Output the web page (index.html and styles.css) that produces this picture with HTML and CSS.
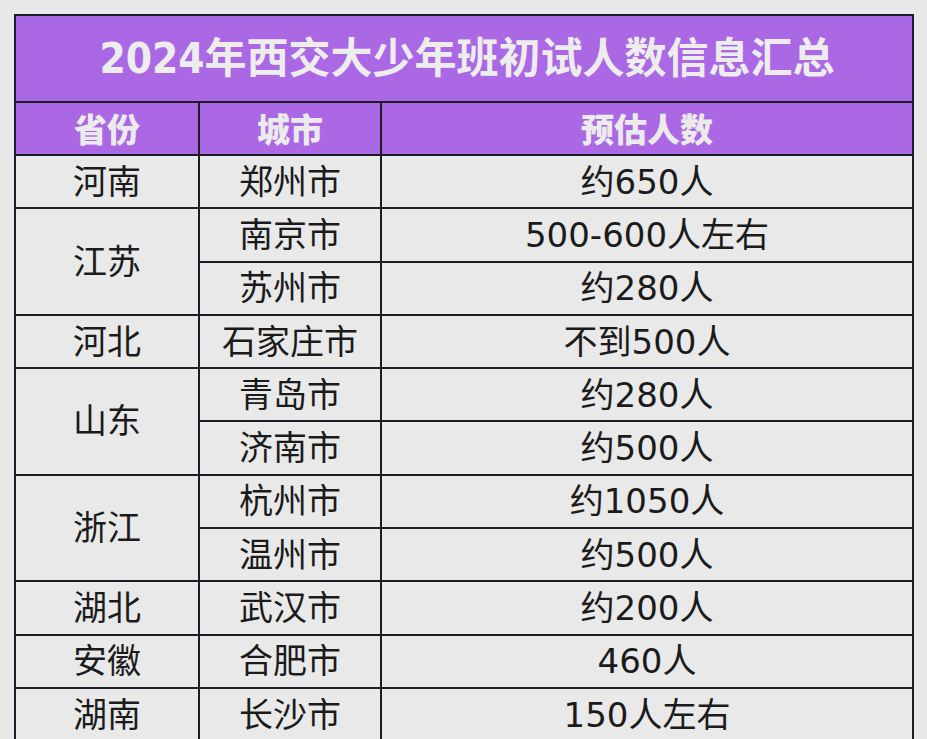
FILE: index.html
```html
<!DOCTYPE html>
<html lang="zh-CN">
<head>
<meta charset="utf-8">
<title>2024年西交大少年班初试人数信息汇总</title>
<link rel="stylesheet" href="styles.css">
</head>
<body>
<div class="page">
  <table class="summary">
    <colgroup>
      <col class="c-prov">
      <col class="c-city">
      <col class="c-num">
    </colgroup>
    <thead>
      <tr class="title-row"><th colspan="3" class="title">2024年西交大少年班初试人数信息汇总</th></tr>
      <tr class="head-row"><th>省份</th><th>城市</th><th>预估人数</th></tr>
    </thead>
    <tbody>
      <tr><td>河南</td><td>郑州市</td><td>约650人</td></tr>
      <tr><td rowspan="2">江苏</td><td>南京市</td><td>500-600人左右</td></tr>
      <tr><td>苏州市</td><td>约280人</td></tr>
      <tr><td>河北</td><td>石家庄市</td><td>不到500人</td></tr>
      <tr><td rowspan="2">山东</td><td>青岛市</td><td>约280人</td></tr>
      <tr><td>济南市</td><td>约500人</td></tr>
      <tr><td rowspan="2">浙江</td><td>杭州市</td><td>约1050人</td></tr>
      <tr><td>温州市</td><td>约500人</td></tr>
      <tr><td>湖北</td><td>武汉市</td><td>约200人</td></tr>
      <tr><td>安徽</td><td>合肥市</td><td>460人</td></tr>
      <tr><td>湖南</td><td>长沙市</td><td>150人左右</td></tr>
    </tbody>
  </table>
</div>
</body>
</html>
```

FILE: styles.css
```css
html, body {
  margin: 0;
  padding: 0;
  background: #e8e8e8;
}

.page {
  padding: 14px 15px 0 14px;
  height: 739px;
  box-sizing: border-box;
  overflow: hidden;
}

.summary {
  width: 898px;
  border-collapse: collapse;
  table-layout: fixed;
  font-family: "DejaVu Sans", "Noto Sans CJK SC", sans-serif;
  color: #1b1b1b;
}

.c-prov { width: 184px; }
.c-city { width: 182px; }
.c-num { width: 532px; }

.summary th,
.summary td {
  border: 2px solid #1d1b26;
  padding: 0;
  text-align: center;
  vertical-align: middle;
  white-space: nowrap;
}

.summary td {
  background: #e9e9e9;
  font-size: 34px;
  font-weight: 400;
  height: 51.3px;
  line-height: 1;
}

.summary th {
  background: #ab68e4;
  color: #ebebeb;
  font-family: "Noto Sans CJK SC", sans-serif;
  font-weight: 900;
  font-size: 33px;
  line-height: 1;
}

.head-row th {
  height: 51px;
}

.title-row th.title {
  height: 85px;
  font-family: "DejaVu Sans Condensed", "Noto Sans CJK SC", sans-serif;
  font-weight: 700;
  font-size: 42px;
  color: #ededed;
  padding-left: 6px;
}
```
